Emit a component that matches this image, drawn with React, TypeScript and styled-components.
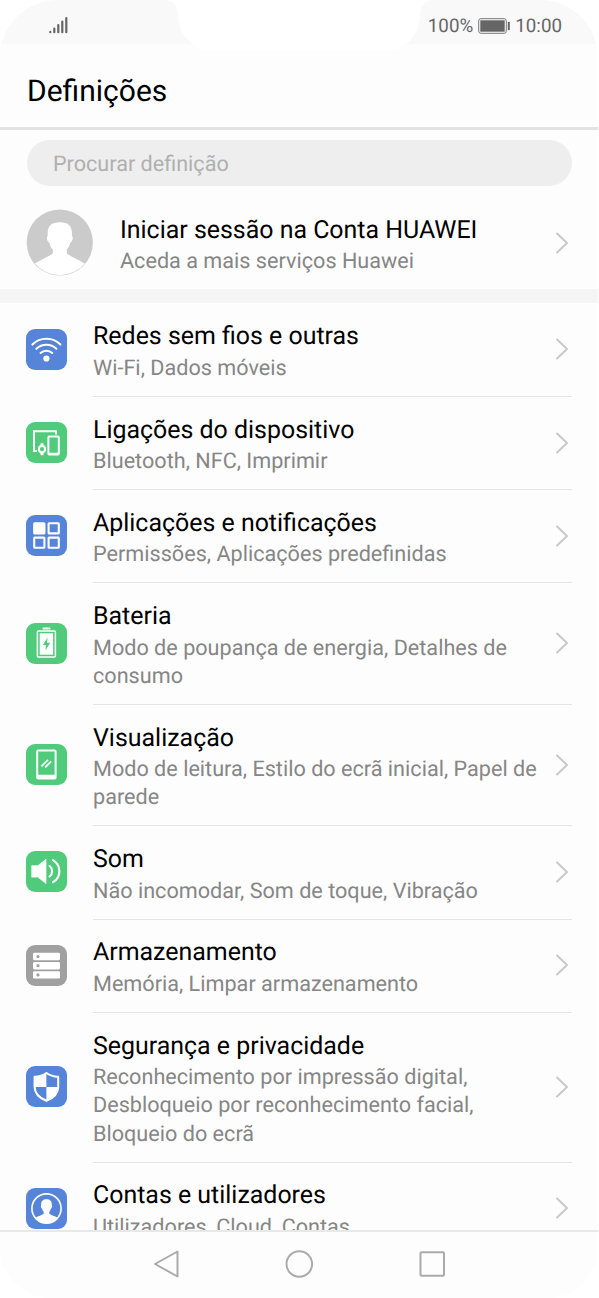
import React from 'react';
import styled, { createGlobalStyle } from 'styled-components';

const BLUE = '#5584d8';
const GREEN = '#50cb7b';
const GRAY = '#a0a0a0';

const GlobalStyle = createGlobalStyle`
  * { box-sizing: border-box; }
  body {
    margin: 0;
    background: #fff;
    font-family: Roboto, 'Liberation Sans', sans-serif;
    text-rendering: geometricPrecision;
  }
`;

const Screen = styled.main`
  position: relative;
  width: 598px;
  height: 1298px;
  display: flex;
  flex-direction: column;
  overflow: hidden;
  background: #fdfdfd;
  border-radius: 58px 58px 50px 50px;
`;

const StatusBar = styled.header`
  height: 44px;
  flex: none;
  display: flex;
  align-items: center;
  justify-content: space-between;
  padding: 7px 36px 0 48px;
  background: #f9f9f9;
`;

const StatusGroup = styled.div`
  display: flex;
  align-items: center;
  gap: 5px;
  color: #666;
  font-size: 18.8px;
  line-height: 24px;
`;

const Notch = styled.svg`
  position: absolute;
  top: 0;
  left: 164px;
`;

const TitleBar = styled.div`
  height: 86px;
  flex: none;
  display: flex;
  align-items: center;
  padding: 12px 27px 0;
  border-bottom: 3px solid #e3e3e3;
`;

const Title = styled.h1`
  margin: 0;
  font-size: 30px;
  font-weight: 400;
  color: #000;
`;

const Content = styled.div`
  flex: 1;
  min-height: 0;
  overflow: hidden;
`;

const SearchField = styled.div`
  height: 46px;
  margin: 10px 26px 0 27px;
  padding: 3px 26px 0;
  display: flex;
  align-items: center;
  border-radius: 23px;
  background: #eee;
  color: #b0b0b0;
  font-size: 21.6px;
`;

const Account = styled.div`
  height: 103px;
  display: flex;
  align-items: center;
  gap: 27px;
  padding: 10px 26px 0 26px;
`;

const AccountTexts = styled.div`
  flex: 1;
  padding-top: 5.6px;
`;

const Divider = styled.div`
  height: 14px;
  margin-bottom: 0.7px;
  background: #f5f5f5;
`;

const Item = styled.div`
  display: flex;
  align-items: center;
  padding-left: 26px;
`;

const Tile = styled.svg<{ $color: string }>`
  flex: none;
  width: 41px;
  height: 41px;
  margin: 0 26px 2px 0;
  border-radius: 9px;
  background: ${(p) => p.$color};
`;

const ItemBody = styled.div<{ $last?: boolean }>`
  flex: 1;
  display: flex;
  align-items: center;
  margin-right: 26px;
  padding: 16.7px 0 12.65px;
  border-bottom: 1px solid ${(p) => (p.$last ? 'transparent' : '#e4e4e4')};
`;

const Texts = styled.div`
  flex: 1;
`;

const Name = styled.div`
  font-size: 24.93px;
  line-height: 34.6px;
  color: #000;
  white-space: nowrap;
`;

const Detail = styled.div`
  font-size: 21.63px;
  line-height: 28.3px;
  color: #868686;
  white-space: pre;
`;

const Arrow = styled.svg<{ $lift?: boolean }>`
  flex: none;
  width: 14px;
  height: 22px;
  margin-right: 3px;
  margin-bottom: ${(p) => (p.$lift ? '5px' : '0')};
`;

const NavBar = styled.nav`
  height: 68px;
  flex: none;
  display: flex;
  align-items: center;
  justify-content: center;
  gap: 106px;
  padding: 0 0 2px;
  border-top: 2px solid #e8e8e8;
`;

const Chevron = ({ lift }: { lift?: boolean }) => (
  <Arrow $lift={lift} viewBox="0 0 14 22" fill="none" stroke="#c9c9c9" strokeWidth="2" strokeLinecap="round" strokeLinejoin="round">
    <path d="M2 1.5 12 11 2 20.5" />
  </Arrow>
);

const icons: Record<string, React.ReactNode> = {
  wifi: (
    <g fill="none" stroke="#fff" strokeWidth="2.1" strokeLinecap="round">
      <path d="M6.4 15.6a19.8 19.8 0 0 1 28 0" />
      <path d="M10.4 19.8a14.3 14.3 0 0 1 20 0" />
      <path d="M14.6 24a8.4 8.4 0 0 1 11.6 0" />
      <circle cx="20.4" cy="29.5" r="3.1" fill="#fff" stroke="none" />
    </g>
  ),
  devices: (
    <g fill="none" stroke="#fff" strokeWidth="2">
      <path d="M11 29H8V9.2h22v3.2" />
      <rect x="22.4" y="14.6" width="10.4" height="18" rx="0.8" />
      <path d="M22.4 31.7h10" />
      <circle cx="16" cy="27.2" r="3.1" />
      <path d="M14.2 24l.5-2.8h2.6l.5 2.8zM14.2 30.5l.5 2.8h2.6l.5-2.8z" fill="#fff" stroke="none" />
    </g>
  ),
  apps: (
    <g fill="none" stroke="#fff" strokeWidth="2.1">
      <rect x="8.2" y="8.2" width="10.2" height="10.2" fill="#fff" rx="0.5" />
      <rect x="22.6" y="8.2" width="10.2" height="10.2" rx="0.5" />
      <rect x="8.2" y="22.6" width="10.2" height="10.2" rx="0.5" />
      <rect x="22.6" y="22.6" width="10.2" height="10.2" rx="0.5" />
    </g>
  ),
  battery: (
    <g>
      <rect x="16.5" y="4.5" width="8" height="2" rx="0.8" fill="#fff" />
      <rect x="11.4" y="8" width="18" height="26" rx="1" fill="none" stroke="#fff" strokeWidth="1.5" />
      <rect x="13.7" y="10.3" width="13.4" height="21.4" fill="#fff" />
      <path d="M21.6 14.4 16.8 22h3.1l-.5 5.6 4.8-7.8H21z" fill={GREEN} />
    </g>
  ),
  display: (
    <g fill="none" stroke="#fff" strokeWidth="2">
      <rect x="11.2" y="6.4" width="18.4" height="28" rx="1" />
      <path d="M11 30.8h19v4H11z" fill="#fff" stroke="none" />
      <path d="M15.4 22.4l6.6-6.6M19.2 23.4l6-6" strokeWidth="1.8" />
    </g>
  ),
  sound: (
    <g fill="none" stroke="#fff" strokeWidth="2.1" strokeLinecap="round">
      <path d="M6 14.7h5.8l8.2-6.4v24.2l-8.2-6.4H6z" fill="#fff" strokeWidth="0.7" />
      <path d="M23.6 15a6.7 6.7 0 0 1 0 10.5" />
      <path d="M27 9.2a12.7 12.7 0 0 1 0 22" />
    </g>
  ),
  storage: (
    <g fill="#fff">
      <rect x="7" y="7.8" width="27" height="7.4" rx="1.4" />
      <rect x="7" y="17" width="27" height="7.4" rx="1.4" />
      <rect x="7" y="26.2" width="27" height="7.4" rx="1.4" />
      <circle cx="12" cy="11.5" r="1.6" fill={GRAY} />
      <circle cx="12" cy="20.7" r="1.6" fill={GRAY} />
      <circle cx="12" cy="29.9" r="1.6" fill={GRAY} />
    </g>
  ),
  shield: (
    <g>
      <path
        d="M20.4 7c3.6 2.6 7.2 3.6 11.8 3.9v9.8c0 6.6-4.7 11.2-11.8 14.1C13.3 31.9 8.6 27.3 8.6 20.7V10.9C13.2 10.6 16.8 9.6 20.4 7z"
        fill="none"
        stroke="#fff"
        strokeWidth="2.1"
        strokeLinejoin="round"
      />
      <path d="M20.4 7v14H8.6V10.9C13.2 10.6 16.8 9.6 20.4 7zM20.4 21h11.8c0 6.6-4.7 10.9-11.8 13.8z" fill="#fff" />
    </g>
  ),
  user: (
    <g>
      <circle cx="20.5" cy="20.5" r="14.6" fill="none" stroke="#fff" strokeWidth="1.6" />
      <path
        d="M20.5 11.2c-4 0-5.6 2.3-5.3 6-.7.5-.3 2.8.8 3.2.4 1.7 1 2.5 1.7 3.2v2.1c-2 1.7-5.3 2-8.3 4.1a14.4 14.4 0 0 0 22.2 0c-3-2.1-6.3-2.4-8.3-4.1v-2.1c.7-.7 1.3-1.5 1.7-3.2 1.1-.4 1.5-2.7.8-3.2.3-3.7-1.3-6-5.3-6z"
        fill="#fff"
      />
    </g>
  ),
};

const items = [
  { icon: 'wifi', color: BLUE, name: 'Redes sem fios e outras', detail: 'Wi-Fi, Dados móveis' },
  { icon: 'devices', color: GREEN, name: 'Ligações do dispositivo', detail: 'Bluetooth, NFC, Imprimir' },
  { icon: 'apps', color: BLUE, name: 'Aplicações e notificações', detail: 'Permissões, Aplicações predefinidas' },
  { icon: 'battery', color: GREEN, name: 'Bateria', detail: 'Modo de poupança de energia, Detalhes de\nconsumo' },
  { icon: 'display', color: GREEN, name: 'Visualização', detail: 'Modo de leitura, Estilo do ecrã inicial, Papel de\nparede' },
  { icon: 'sound', color: GREEN, name: 'Som', detail: 'Não incomodar, Som de toque, Vibração' },
  { icon: 'storage', color: GRAY, name: 'Armazenamento', detail: 'Memória, Limpar armazenamento' },
  {
    icon: 'shield',
    color: BLUE,
    name: 'Segurança e privacidade',
    detail: 'Reconhecimento por impressão digital,\nDesbloqueio por reconhecimento facial,\nBloqueio do ecrã',
  },
  { icon: 'user', color: BLUE, name: 'Contas e utilizadores', detail: 'Utilizadores, Cloud, Contas' },
];

export default function App() {
  return (
    <>
      <GlobalStyle />
      <Screen>
        <StatusBar>
          <svg width="21" height="20" viewBox="0 0 21 20" stroke="#666" strokeWidth="2.2" strokeLinecap="round">
            <path d="M2.3 15.9v.3M6.3 12.5v3.7M10.3 9v7.2M14.3 5.5v10.7M18.3 2.2v14" />
          </svg>
          <StatusGroup>
            <span>100%</span>
            <svg width="32" height="16" viewBox="0 0 32 16">
              <rect x="0.7" y="0.7" width="27.6" height="14.6" rx="2.2" fill="none" stroke="#777" strokeWidth="1" />
              <rect x="2.3" y="2.3" width="24.4" height="11.4" fill="#666" />
              <rect x="29.8" y="3.8" width="2" height="8.4" rx="0.8" fill="#666" />
            </svg>
            <span>10:00</span>
          </StatusGroup>
        </StatusBar>
        <Notch width="271" height="52" viewBox="0 0 271 52">
          <path d="M0 0C9 0 14 6 14 15C14 34 28 51 50 51H221C243 51 256 34 256 15C256 6 261 0 271 0Z" fill="#fff" />
        </Notch>
        <TitleBar>
          <Title>Definições</Title>
        </TitleBar>
        <Content>
          <SearchField>Procurar definição</SearchField>
          <Account>
            <svg width="67" height="67" viewBox="0 0 67 67">
              <circle cx="33.8" cy="33.5" r="33.1" fill="#cbcbcb" />
              <path
                d="M33.8 13.2c-9 0-12.8 4-12.1 13.5-1.6 1.3-.7 6.3 1.6 7 1 3.6 2.3 5.5 3.5 7v3.5c-2 2.5-10 5.5-18 10.2a32.4 32.4 0 0 0 50 0c-8-4.7-16-7.7-18-10.2v-3.5c1.2-1.5 2.5-3.4 3.5-7 2.3-.7 3.2-5.7 1.6-7 .7-9.5-3.1-13.5-12.1-13.5z"
                fill="#fff"
              />
            </svg>
            <AccountTexts>
              <Name>Iniciar sessão na Conta HUAWEI</Name>
              <Detail>Aceda a mais serviços Huawei</Detail>
            </AccountTexts>
            <Chevron />
          </Account>
          <Divider />
          {items.map((item, i) => (
            <Item key={item.name}>
              <Tile $color={item.color} viewBox="0 0 41 41">
                {icons[item.icon]}
              </Tile>
              <ItemBody $last={i === items.length - 1}>
                <Texts>
                  <Name>{item.name}</Name>
                  <Detail>{item.detail}</Detail>
                </Texts>
                <Chevron lift />
              </ItemBody>
            </Item>
          ))}
        </Content>
        <NavBar>
          <svg width="26" height="28" viewBox="0 0 26 28" fill="none" stroke="#aaa" strokeWidth="2" strokeLinejoin="round">
            <path d="M24.5 1.5v25L2 14z" />
          </svg>
          <svg width="28" height="28" viewBox="0 0 28 28" fill="none" stroke="#aaa" strokeWidth="2">
            <circle cx="14.3" cy="14" r="12.8" />
          </svg>
          <svg width="26" height="26" viewBox="0 0 26 26" fill="none" stroke="#aaa" strokeWidth="2">
            <rect x="1.5" y="1.2" width="23.5" height="23.6" rx="1" />
          </svg>
        </NavBar>
      </Screen>
    </>
  );
}
